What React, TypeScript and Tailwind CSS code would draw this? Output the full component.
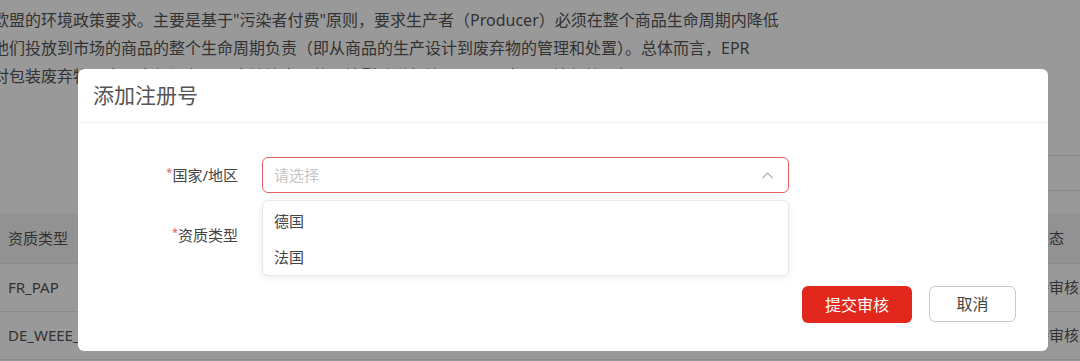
import React from "react";
import { ChevronUp } from "lucide-react";

const FONT = {
  fontFamily: '"Noto Sans", "Noto Sans CJK SC", sans-serif',
};

export default function App() {
  return (
    <div
      className="relative w-[1080px] h-[361px] overflow-hidden bg-white text-[#555]"
      style={FONT}
    >
      {/* Background page */}
      <div className="pt-[6px] -ml-[7px] text-[16px] leading-[28px] whitespace-nowrap">
        <p>欧盟的环境政策要求。主要是基于"污染者付费"原则，要求生产者（Producer）必须在整个商品生命周期内降低</p>
        <p>他们投放到市场的商品的整个生命周期负责（即从商品的生产设计到废弃物的管理和处置）。总体而言，EPR</p>
        <p>对包装废弃物、电子电气设备以及电池等产品的环境影响进行管理，从而实现环境保护目标。</p>
      </div>
      <div className="mt-[65px] flex justify-end">
        <div className="w-[40px] h-[36px] border-y border-[#e5e5e5]" />
      </div>
      <div className="mt-[23px] text-[15px]">
        <div className="h-[50px] bg-[#f3f3f3] flex items-center border-b border-[#e8e8e8]">
          <span className="pl-[8px] w-[1034px]">资质类型</span>
          <span>状态</span>
        </div>
        <div className="h-[48px] flex items-center border-b border-[#e8e8e8]">
          <span className="pl-[8px] w-[1034px]">FR_PAP</span>
          <span>待审核</span>
        </div>
        <div className="h-[48px] flex items-center border-b border-[#e8e8e8]">
          <span className="pl-[8px] w-[1034px]">DE_WEEE_0001</span>
          <span>待审核</span>
        </div>
      </div>

      {/* Overlay */}
      <div className="absolute inset-0 bg-black/40" />

      {/* Modal */}
      <div className="absolute left-[78px] top-[69px] w-[970px] h-[282px] bg-white rounded-[6px] flex flex-col">
        <div className="h-[54px] px-[15px] flex items-center border-b border-[#ebeef2]">
          <span className="text-[21px] text-[#555] leading-none">添加注册号</span>
        </div>
        <div className="pt-[34px] flex flex-col gap-[24px]">
          <div className="relative flex items-center h-[36px]">
            <label className="w-[160px] text-right text-[15px] text-[#444]">
              <span className="text-[#e05a6a] text-[11px] align-top">*</span>
              国家/地区
            </label>
            <div className="ml-[24px] w-[527px] h-[36px] border border-[#e06062] rounded-[6px] flex items-center justify-between pl-[11px] pr-[11px]">
              <span className="text-[15px] text-[#c4c4c4]">请选择</span>
              <ChevronUp size={19} strokeWidth={1.5} color="#a8a8a8" />
            </div>
            <div className="absolute left-[184px] top-[43px] z-10 w-[527px] h-[76px] bg-white border border-[#e4e7ed] rounded-[6px] shadow-[0_2px_8px_rgba(0,0,0,0.08)] py-[2px] text-[15px] text-[#444]">
              <div className="h-[36px] flex items-center pl-[11px]">德国</div>
              <div className="h-[36px] flex items-center pl-[11px]">法国</div>
            </div>
          </div>
          <div className="flex items-center h-[36px]">
            <label className="w-[160px] text-right text-[15px] text-[#444]">
              <span className="text-[#e05a6a] text-[11px] align-top">*</span>
              资质类型
            </label>
            <div className="ml-[24px] w-[527px] h-[36px] border border-[#dcdfe6] rounded-[6px]" />
          </div>
        </div>
        <div className="mt-[33px] pr-[32px] flex justify-end gap-[17px]">
          <button className="w-[110px] h-[37px] bg-[#e2271c] text-white text-[16px] rounded-[6px]">
            提交审核
          </button>
          <button className="w-[87px] h-[36px] bg-white border border-[#c9c9c9] text-[#444] text-[16px] rounded-[6px]">
            取消
          </button>
        </div>
      </div>
    </div>
  );
}
